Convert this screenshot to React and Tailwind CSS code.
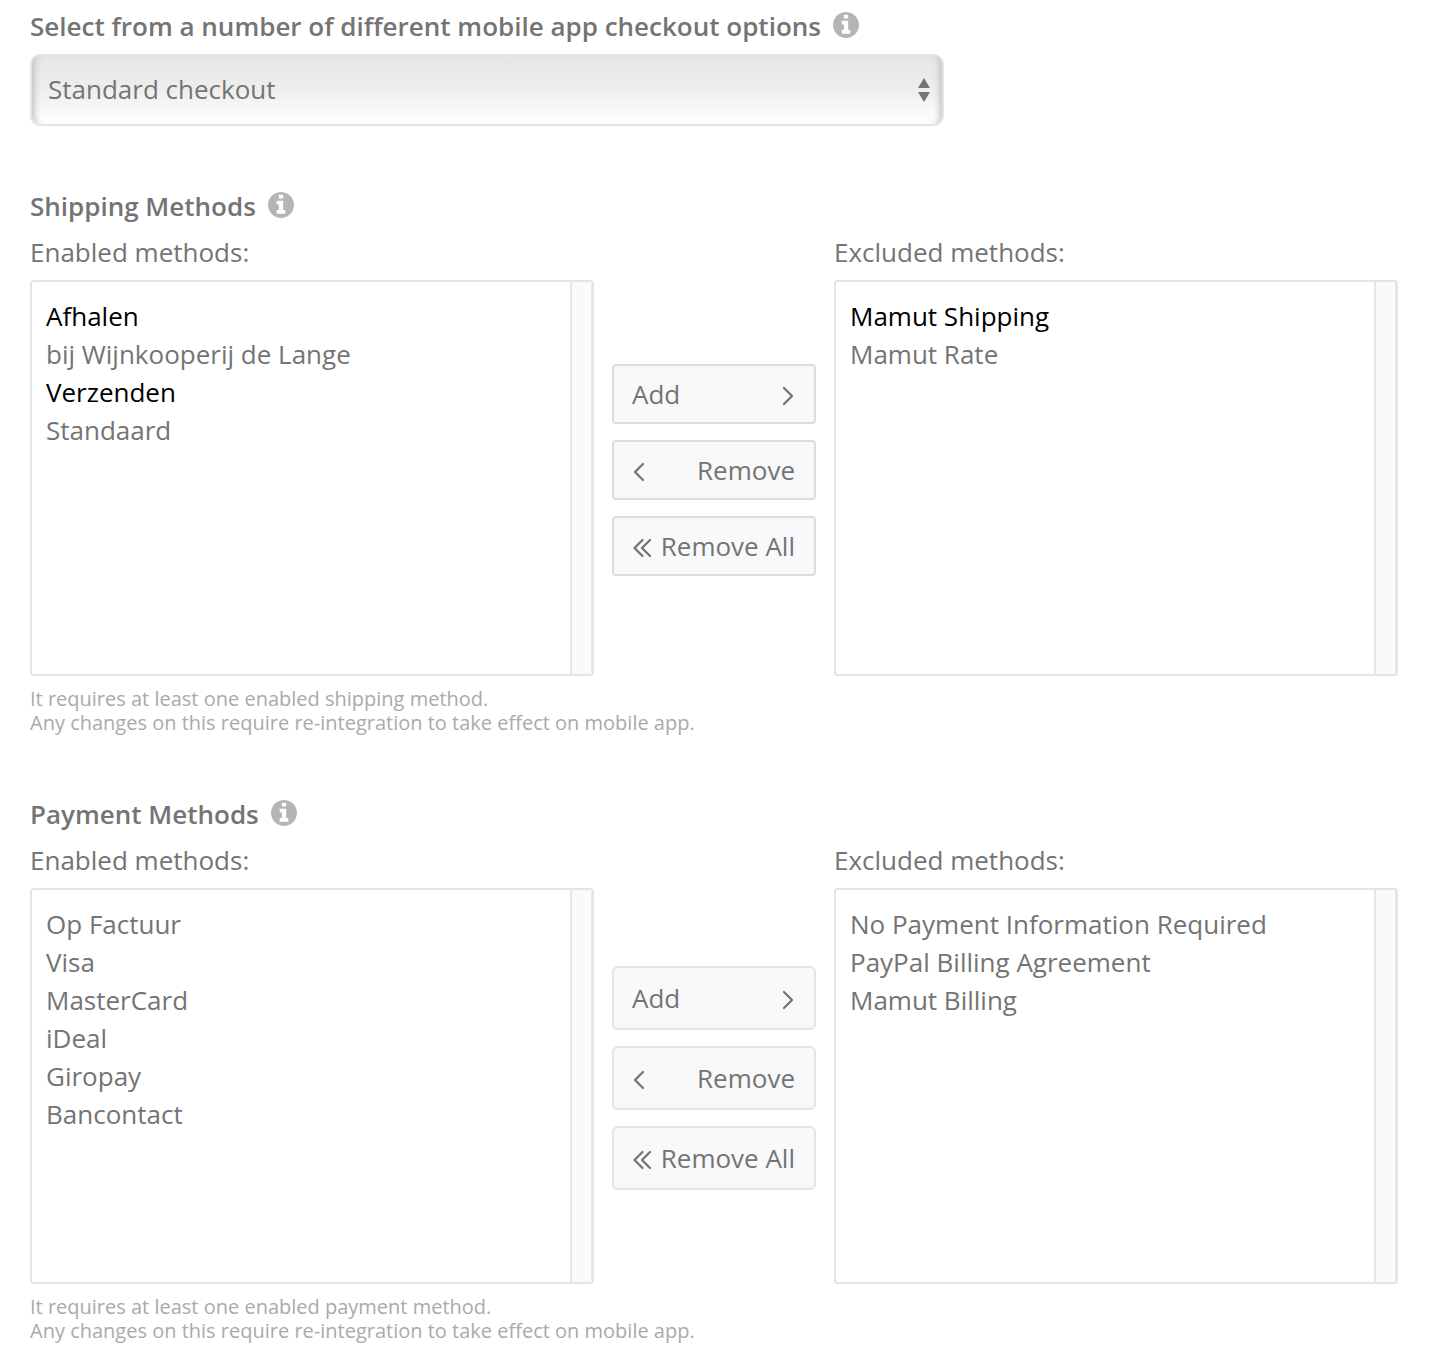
const shipping = {
  id: 'shipping',
  title: 'Shipping Methods',
  enabled: [
    { label: 'Afhalen', options: ['bij Wijnkooperij de Lange'] },
    { label: 'Verzenden', options: ['Standaard'] },
  ],
  excluded: [{ label: 'Mamut Shipping', options: ['Mamut Rate'] }],
  note: 'It requires at least one enabled shipping method.',
};

const payment = {
  id: 'payment',
  title: 'Payment Methods',
  enabled: [{ options: ['Op Factuur', 'Visa', 'MasterCard', 'iDeal', 'Giropay', 'Bancontact'] }],
  excluded: [
    { options: ['No Payment Information Required', 'PayPal Billing Agreement', 'Mamut Billing'] },
  ],
  note: 'It requires at least one enabled payment method.',
};

const Icon = ({ d, width }) => (
  <svg
    width={width}
    height="20"
    viewBox={`0 0 ${width} 20`}
    fill="none"
    stroke="currentColor"
    strokeWidth="2.3"
    strokeLinecap="round"
    strokeLinejoin="round"
    className="mt-1 shrink-0"
    aria-hidden="true"
  >
    <path d={d} />
  </svg>
);

const Info = () => (
  <svg
    viewBox="128 128 1536 1536"
    fill="currentColor"
    className="-mt-0.5 size-[26px] shrink-0 text-[#b5b5b5]"
    aria-hidden="true"
  >
    <path d="M1152 1376v-160q0-14-9-23t-23-9h-96v-512q0-14-9-23t-23-9h-320q-14 0-23 9t-9 23v160q0 14 9 23t23 9h96v320h-96q-14 0-23 9t-9 23v160q0 14 9 23t23 9h448q14 0 23-9t9-23zm-128-896v-160q0-14-9-23t-23-9h-192q-14 0-23 9t-9 23v160q0 14 9 23t23 9h192q14 0 23-9t9-23zm640 416q0 209-103 385.5t-279.5 279.5-385.5 103-385.5-103-279.5-279.5-103-385.5 103-385.5 279.5-279.5 385.5-103 385.5 103 279.5 279.5 103 385.5z" />
  </svg>
);

const MethodList = ({ id, label, groups }) => (
  <div className="min-w-0 flex-1">
    <label htmlFor={id} className="mb-2.5 block">
      {label}
    </label>
    <div className="flex h-[396px] overflow-hidden rounded border-2 border-[#e4e4e4] bg-white">
      <select
        id={id}
        multiple
        className="h-full min-w-0 flex-1 overflow-hidden px-3 py-4 outline-none [&_optgroup]:p-0 [&_optgroup]:font-normal [&_optgroup]:text-black [&_option]:px-0.5 [&_option]:pb-0 [&_option]:text-[#747474] [&_option]:before:content-none [&>option]:h-[38px] [&>option]:pt-0 [&>optgroup>option]:h-[39px] [&>optgroup>option]:pt-px"
      >
        {groups.map((group, i) =>
          group.label ? (
            <optgroup key={i} label={group.label}>
              {group.options.map((name) => (
                <option key={name}>{name}</option>
              ))}
            </optgroup>
          ) : (
            group.options.map((name) => <option key={name}>{name}</option>)
          )
        )}
      </select>
      {/* scroll track */}
      <div className="w-[22px] border-r border-l-2 border-r-[#ebebeb] border-l-[#e7e7e7] bg-[#fafafa]"></div>
    </div>
  </div>
);

const MethodSection = ({ section, buttonClass }) => {
  const button = `flex w-full cursor-pointer items-center justify-between border-2 bg-[#f8f9fb] pr-[19px] pl-[18px] ${buttonClass}`;

  return (
    <section>
      <h2 className="mb-2.5 flex items-center gap-3 font-semibold">
        {section.title}
        <Info />
      </h2>
      <div className="flex items-center gap-[18px]">
        <MethodList id={`${section.id}-enabled`} label="Enabled methods:" groups={section.enabled} />
        <div className="flex w-[204px] shrink-0 flex-col gap-4 pt-[30px]">
          <button type="button" className={button}>
            Add
            <Icon width={14} d="M3 2l8 8-8 8" />
          </button>
          <button type="button" className={button}>
            <Icon width={14} d="M11 2l-8 8 8 8" />
            Remove
          </button>
          <button type="button" className={button}>
            <Icon width={22} d="M10.5 2l-8 8 8 8M18 2l-8 8 8 8" />
            Remove All
          </button>
        </div>
        <MethodList id={`${section.id}-excluded`} label="Excluded methods:" groups={section.excluded} />
      </div>
      <p className="mt-[11px] text-[20px] leading-6 text-[#aaaaaa]">
        {section.note}
        <br />
        Any changes on this require re-integration to take effect on mobile app.
      </p>
    </section>
  );
};

const App = () => {
  return (
    <main className="bg-white pt-2 pr-[34px] pb-4 pl-[30px] font-['Open_Sans',sans-serif] text-[26px] leading-9 text-[#747474]">
      <div className="mb-2.5 flex items-center gap-3 font-semibold">
        <label htmlFor="checkout">Select from a number of different mobile app checkout options</label>
        <Info />
      </div>
      <div className="relative max-w-[914px]">
        <select
          id="checkout"
          className="block h-[72px] w-full appearance-none rounded-[10px] border-2 border-[#e4e4e4] bg-linear-to-b from-[#e6e6e6] via-[#eeeeee] to-white px-4 pb-0.5 shadow-[inset_9px_0_7px_-7px_#bdbdbd,inset_-9px_0_7px_-7px_#bdbdbd] outline-none"
        >
          <option>Standard checkout</option>
        </select>
        <svg
          width="12"
          height="24"
          viewBox="0 0 12 24"
          fill="currentColor"
          className="pointer-events-none absolute top-6 right-3.5"
          aria-hidden="true"
        >
          <path d="M6 0l6 10H0zM6 24L0 14h12z" />
        </svg>
      </div>

      <div className="mt-[62px] flex flex-col gap-[61px]">
        <MethodSection section={shipping} buttonClass="h-[60px] rounded border-[#dcdde1]" />
        <MethodSection section={payment} buttonClass="h-16 rounded-md border-[#e3e4e6]" />
      </div>
    </main>
  );
};

export default App;
